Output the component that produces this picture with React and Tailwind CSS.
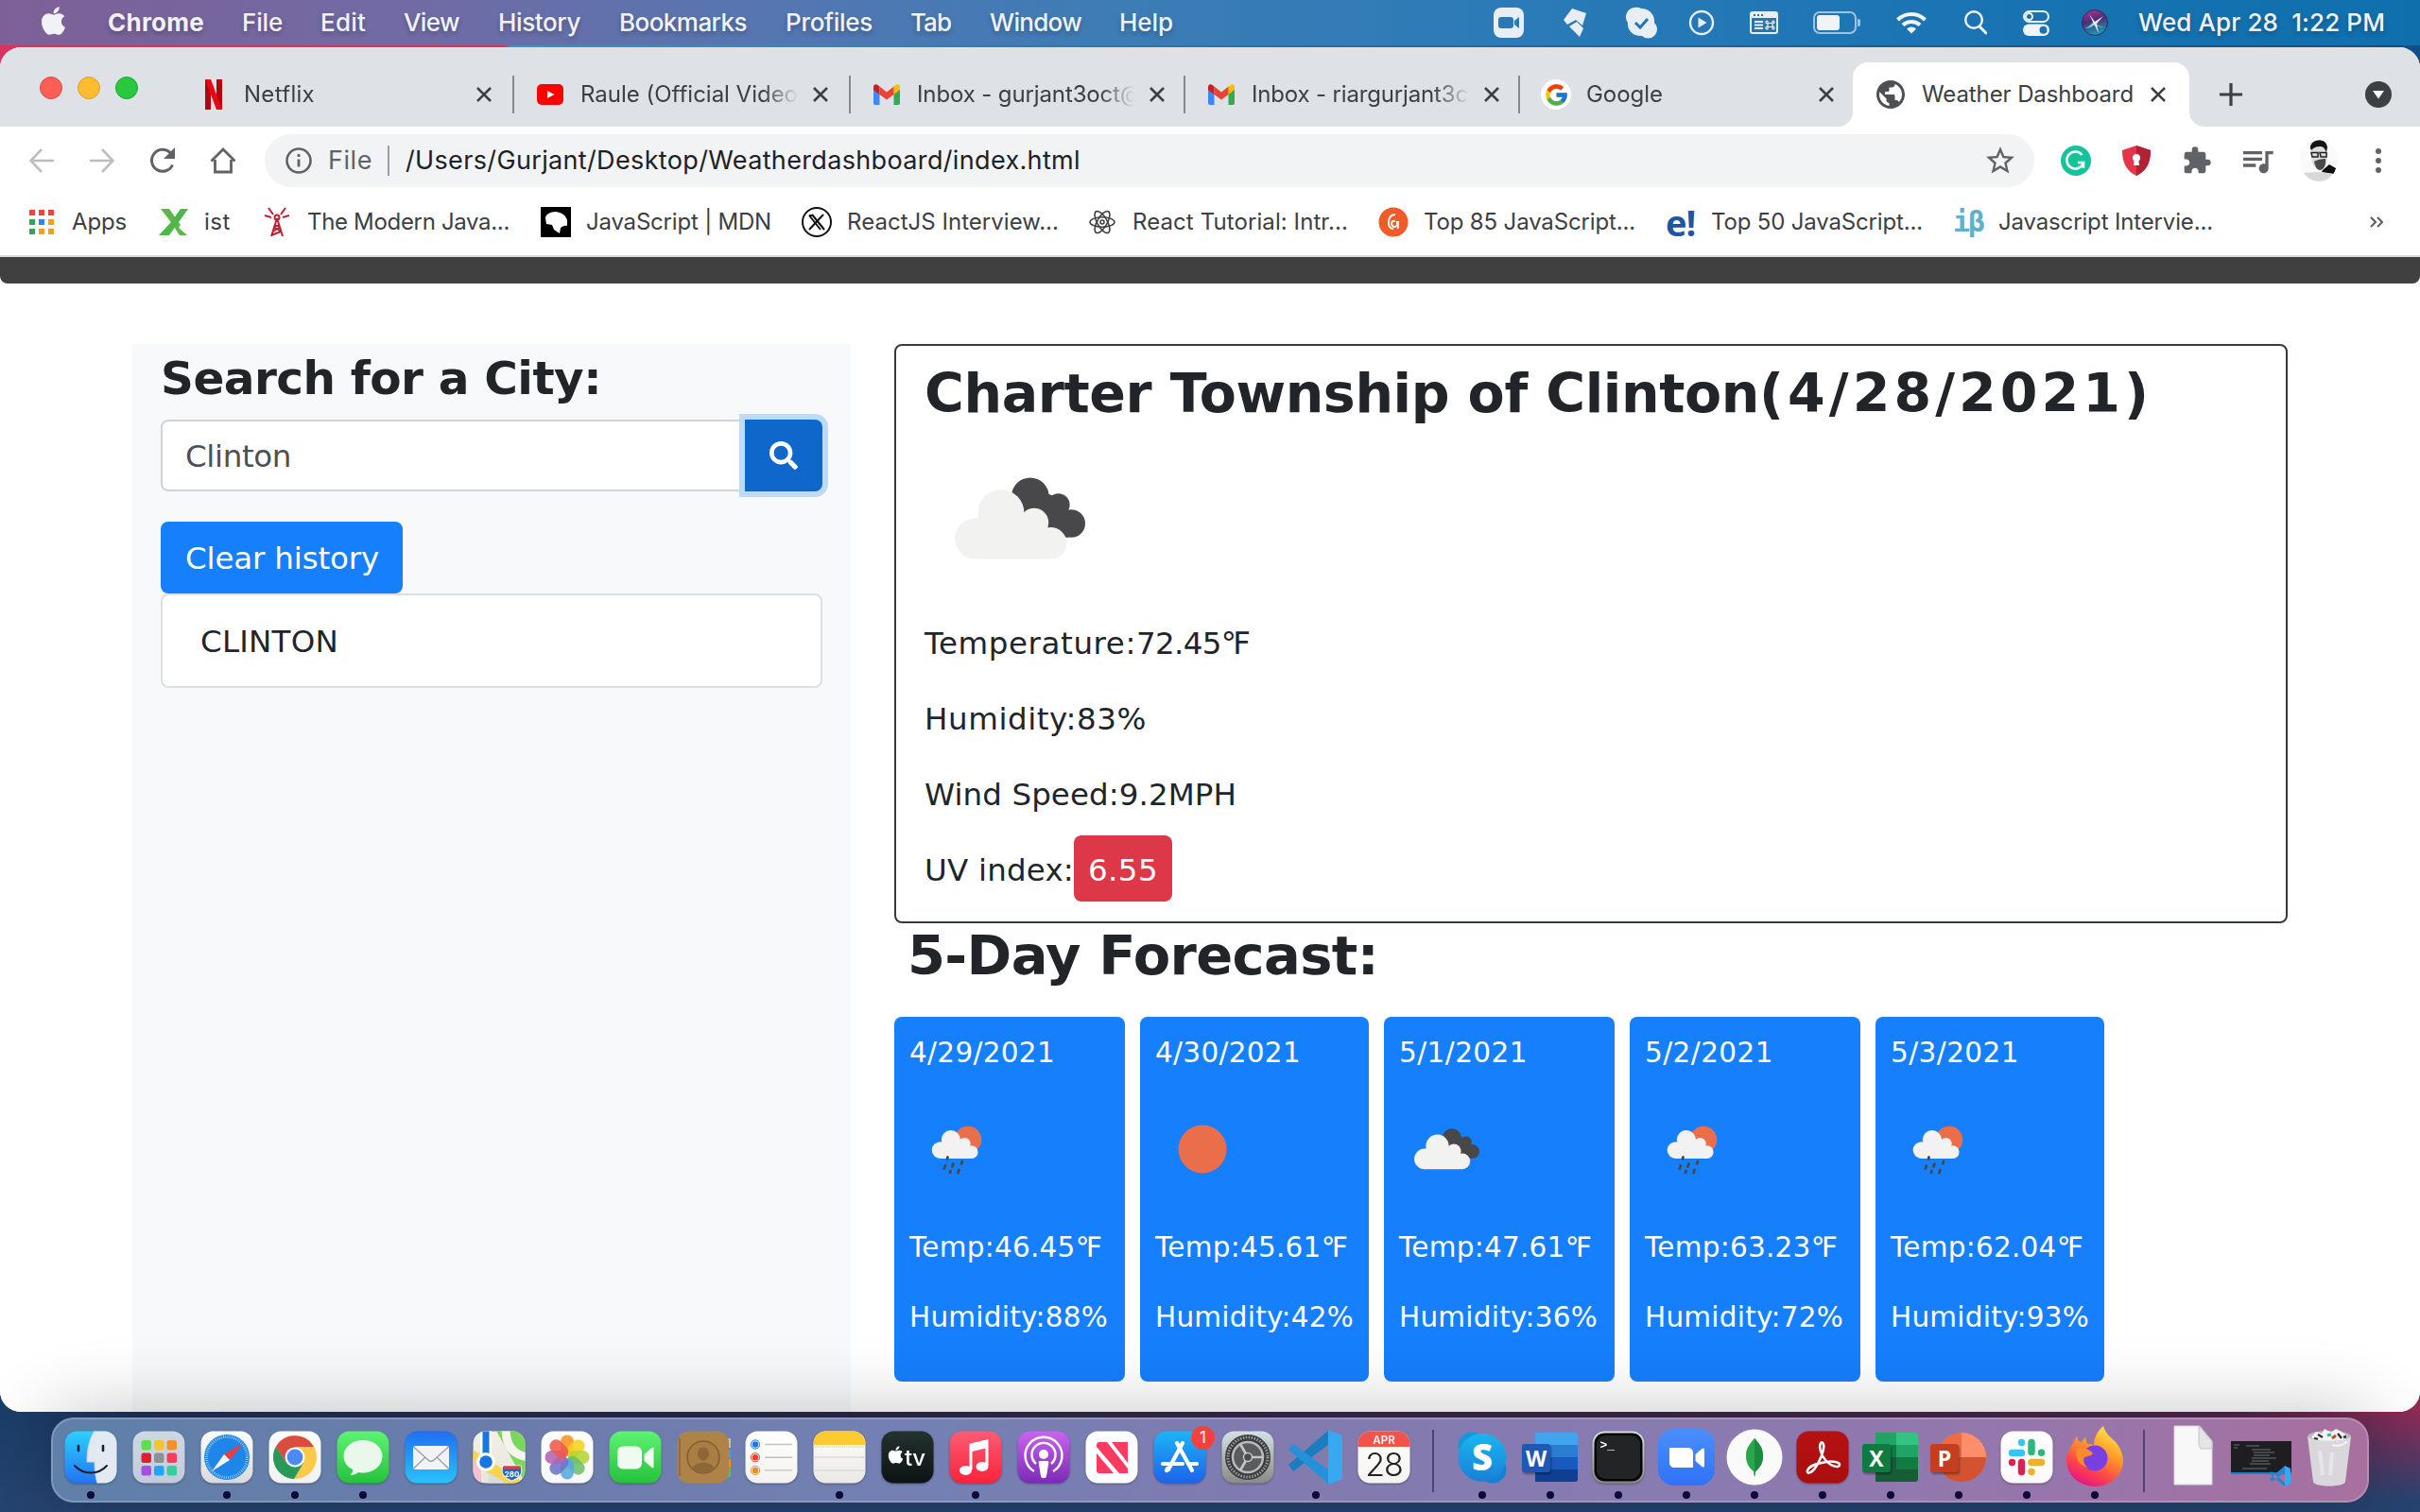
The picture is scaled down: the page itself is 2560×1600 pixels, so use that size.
import React, { useLayoutEffect, useRef } from "react";
import { FcGoogle } from "react-icons/fc";
import { FaApple, FaSearch } from "react-icons/fa";
import { MdExtension, MdQueueMusic, MdStarBorder, MdPublic } from "react-icons/md";

/* Text set to the exact width of its box by adjusting the tracking. */
function Fit({ className = "", children }) {
  const outer = useRef(null);
  const inner = useRef(null);
  useLayoutEffect(() => {
    const apply = () => {
      const el = inner.current;
      if (!el) return;
      el.style.letterSpacing = "0px";
      const delta = outer.current.getBoundingClientRect().width - el.getBoundingClientRect().width;
      el.style.letterSpacing = `${delta / el.textContent.length}px`;
    };
    apply();
    if (document.fonts && document.fonts.ready) document.fonts.ready.then(apply);
  }, []);
  return (
    <span ref={outer} className={"block shrink-0 whitespace-nowrap " + className}>
      <span ref={inner} className="inline-block whitespace-pre">{children}</span>
    </span>
  );
}

const menus = [
  ["Chrome", "ml-[43px] w-[102px] font-bold"],
  ["File", "ml-[40px] w-[43px]"],
  ["Edit", "ml-[40px] w-[48px]"],
  ["View", "ml-[40px] w-[59px]"],
  ["History", "ml-[41px] w-[87px]"],
  ["Bookmarks", "ml-[41px] w-[135px]"],
  ["Profiles", "ml-[41px] w-[92px]"],
  ["Tab", "ml-[40px] w-[43px]"],
  ["Window", "ml-[41px] w-[97px]"],
  ["Help", "ml-[40px] w-[57px]"],
];

function MenuBar() {
  return (
    <div className="flex h-12 items-center bg-[linear-gradient(90deg,#7d6096_0%,#716ba5_17%,#5476b1_32%,#3f7cb5_45%,#2b7bb7_62%,#1b74b3_80%,#0f6fad_100%)] text-[26px] leading-[48px] font-medium text-[#f0f2f8] [text-shadow:0_3px_5px_rgba(0,0,0,0.25)]">
      <FaApple className="-mt-1 ml-[42px] h-[34px] w-[29px] shrink-0" />
      {menus.map(([label, cls]) => (
        <Fit key={label} className={cls}>{label}</Fit>
      ))}
      <svg className="ml-[339px] h-8 w-8 shrink-0" viewBox="0 0 32 32">
        <rect width="32" height="32" rx="8" fill="#e9eef5" />
        <rect x="5" y="10" width="16" height="12" rx="3" fill="#2b78b2" />
        <path d="M22 14l5-4v12l-5-4z" fill="#2b78b2" />
      </svg>
      <svg className="ml-10 h-8 w-7 shrink-0" viewBox="0 0 28 32">
        <path d="M11 1l15 5-4 13-7-6-9 5-4-5z" fill="#e9eef5" />
        <path d="M16 15l7 7-4 9L8 20z" fill="#e9eef5" />
      </svg>
      <svg className="ml-[38px] h-9 w-9 shrink-0" viewBox="0 0 36 36">
        <path d="M11 2a9 9 0 0 1 7 1c9 0 15 7 14 15a9 9 0 0 1-13 14C10 33 3 26 4 18A10 10 0 0 1 11 2z" fill="#e9eef5" />
        <path d="M12 18l5 5 8-9" fill="none" stroke="#2276b3" strokeWidth="3" />
      </svg>
      <svg className="ml-8 h-7 w-7 shrink-0" viewBox="0 0 28 28">
        <circle cx="14" cy="14" r="12" fill="none" stroke="#e9eef5" strokeWidth="2.4" />
        <path d="M10.500 8.500l9 5.500-9 5.500z" fill="#e9eef5" />
      </svg>
      <svg className="ml-[37px] h-6 w-[30px] shrink-0" viewBox="0 0 30 24">
        <rect x="1" y="1" width="28" height="22" rx="2" fill="none" stroke="#e9eef5" strokeWidth="2" />
        <rect x="1" y="1" width="28" height="6" fill="#e9eef5" />
        <path d="M4 4h2M8 4h2M12 4h2" stroke="#2276b3" strokeWidth="2" />
        <path d="M5 11h9M5 14.500h9M5 18h9" stroke="#e9eef5" strokeWidth="2" />
        <path d="M19 12.500h5v4h-5zM19 12.500a1.300 1.300 0 1 1 0-2v8a1.300 1.300 0 1 1 0-2M24 12.500a1.300 1.300 0 1 0 0-2v8a1.300 1.300 0 1 0 0-2" fill="none" stroke="#e9eef5" strokeWidth="1.200" />
      </svg>
      <svg className="ml-[37px] h-6 w-[50px] shrink-0" viewBox="0 0 50 24">
        <rect x="1" y="1" width="44" height="22" rx="6" fill="none" stroke="#a0c4e0" strokeWidth="2" />
        <rect x="4" y="4" width="24" height="16" rx="3" fill="#f0f4f9" />
        <path d="M47 8a4 4 0 0 1 0 8z" fill="#a0c4e0" />
      </svg>
      <svg className="ml-[38px] h-6 w-8 shrink-0" viewBox="0 0 32 24">
        <g fill="none" stroke="#f0f4f9" strokeWidth="4">
          <path d="M1.500 9a20.500 20.500 0 0 1 29 0" />
          <path d="M7 14.500a13 13 0 0 1 18 0" />
        </g>
        <path d="M11 18.500a7 7 0 0 1 10 0l-5 5z" fill="#f0f4f9" />
      </svg>
      <svg className="ml-10 h-[26px] w-6 shrink-0" viewBox="0 0 24 26">
        <circle cx="10" cy="10" r="8.800" fill="none" stroke="#f0f4f9" strokeWidth="2.400" />
        <path d="M16 17l7 7" stroke="#f0f4f9" strokeWidth="3" strokeLinecap="round" />
      </svg>
      <svg className="ml-[38px] h-[27px] w-7 shrink-0" viewBox="0 0 28 27">
        <rect x="1" y="1" width="26" height="11" rx="5.500" fill="none" stroke="#f0f4f9" strokeWidth="2" />
        <circle cx="6.500" cy="6.500" r="3.500" fill="none" stroke="#f0f4f9" strokeWidth="2" />
        <rect y="14.500" width="28" height="12.500" rx="6.200" fill="#f0f4f9" />
        <circle cx="21.500" cy="20.700" r="4" fill="#1973b1" />
      </svg>
      <svg className="ml-[34px] h-7 w-7 shrink-0" viewBox="0 0 28 28">
        <defs>
          <linearGradient id="siri" x1="0" y1="0" x2="0.300" y2="1">
            <stop offset="0" stopColor="#c02f92" /><stop offset="0.500" stopColor="#4b2f78" /><stop offset="1" stopColor="#1c93b4" />
          </linearGradient>
        </defs>
        <circle cx="14" cy="14" r="13.500" fill="url(#siri)" stroke="#3a2a50" />
        <path d="M4 20c4-2 7-4 9-8 2 5 6 6 11 6-4 1-7 0-9-2-3 1-6 4-11 4z" fill="#7be3d8" />
        <path d="M8 5l6 8 9-6-7 8 2 10-5-10z" fill="#f1e9f8" />
      </svg>
      <Fit className="ml-8 w-[261px]">{"Wed Apr 28  1:22 PM"}</Fit>
    </div>
  );
}

function Close() {
  return (
    <svg className="h-4 w-4 shrink-0" viewBox="0 0 16 16">
      <path d="M1 1l14 14M15 1L1 15" stroke="#3c4043" strokeWidth="2.600" />
    </svg>
  );
}

const NetflixIcon = () => (
  <svg className="h-8 w-8" viewBox="0 0 32 32">
    <rect x="7" width="6" height="32" fill="#b1060f" />
    <rect x="19" width="6" height="32" fill="#b1060f" />
    <rect x="7" width="6" height="32" fill="#e50914" transform="skewX(20.600)" />
  </svg>
);
const YoutubeIcon = () => (
  <svg className="h-8 w-8" viewBox="0 0 32 32">
    <rect x="2" y="5" width="28" height="22" rx="5" fill="#ff0000" />
    <path d="M13 12l7.500 4-7.500 4z" fill="#fff" />
  </svg>
);
const GmailIcon = () => (
  <svg className="h-8 w-8" viewBox="0 0 32 32">
    <path d="M2 10l6.500 5v12H4a2 2 0 0 1-2-2z" fill="#4285f4" />
    <path d="M30 10l-6.500 5v12H28a2 2 0 0 0 2-2z" fill="#34a853" />
    <path d="M23.500 7.500L26 5.700c2-1.300 4 0 4 2.300v3l-6.500 5z" fill="#fbbc04" />
    <path d="M8.500 7.500L6 5.700C4 4.400 2 5.700 2 8v3l6.500 5z" fill="#c5221f" />
    <path d="M8.500 7.500l7.500 6 7.500-6V16L16 21.500 8.500 16z" fill="#ea4335" />
  </svg>
);
const GoogleIcon = () => (
  <span className="flex h-8 w-8 items-center justify-center rounded-full bg-white"><FcGoogle size={27} /></span>
);

const tabs = [
  { icon: <NetflixIcon />, cell: "w-[354px] pl-5", title: <Fit className="w-[75px]">Netflix</Fit> },
  { icon: <YoutubeIcon />, cell: "w-[356px] pl-[22px]", title: <Fit className="w-[230px]">Raule (Official Video</Fit> },
  { icon: <GmailIcon />, cell: "w-[354px] pl-[22px]", title: <Fit className="w-[238px]">Inbox - gurjant3oct@</Fit> },
  { icon: <GmailIcon />, cell: "w-[354px] pl-[22px]", title: <Fit className="w-[229px]">Inbox - riargurjant3c</Fit> },
  { icon: <GoogleIcon />, cell: "w-[352px] pl-[22px]", title: <Fit className="w-[81px]">Google</Fit> },
];

function TabStrip() {
  return (
    <div className="flex h-[84px] bg-[#dee1e6] pt-4 text-[24px] leading-[32px] text-[#3c4043]">
      <div className="flex w-[190px] shrink-0 gap-4 pt-[15px] pl-[42px]">
        <span className="h-6 w-6 rounded-full border border-[#e2463f] bg-[#ff5f57]" />
        <span className="h-6 w-6 rounded-full border border-[#e1a116] bg-[#febc2e]" />
        <span className="h-6 w-6 rounded-full border border-[#12ac28] bg-[#28c840]" />
      </div>
      {tabs.map((t, i) => (
        <div key={i} className={"flex h-[68px] shrink-0 items-center " + t.cell}>
          {t.icon}
          <div className="ml-4 w-[230px] shrink-0 overflow-hidden [mask-image:linear-gradient(to_right,#000_84%,transparent_100%)]">{t.title}</div>
          <div className="ml-4 flex flex-1"><Close /></div>
          {i < 4 && <div className="h-10 w-[2px] bg-[#85888d]" />}
        </div>
      ))}
      <div className="relative flex h-[68px] w-[356px] shrink-0 items-center rounded-t-[16px] bg-white pl-6">
        <svg className="absolute bottom-0 -left-4 h-4 w-4" viewBox="0 0 16 16"><path d="M16 0v16H0A16 16 0 0 0 16 0z" fill="#fff" /></svg>
        <svg className="absolute -right-4 bottom-0 h-4 w-4" viewBox="0 0 16 16"><path d="M0 0v16h16A16 16 0 0 1 0 0z" fill="#fff" /></svg>
        <MdPublic className="-ml-0.5 h-9 w-9 text-[#4d5156]" />
        <Fit className="ml-[15px] w-[224px]">Weather Dashboard</Fit>
        <div className="ml-[18px]"><Close /></div>
      </div>
      <svg className="mt-[22px] ml-8 h-6 w-6" viewBox="0 0 24 24"><path d="M12 0v24M0 12h24" stroke="#3c4043" strokeWidth="3.200" /></svg>
      <svg className="mt-5 ml-[130px] h-7 w-7" viewBox="0 0 28 28"><circle cx="14" cy="14" r="14" fill="#3c4043" /><path d="M8 10h12l-6 8.500z" fill="#fff" /></svg>
    </div>
  );
}

function Toolbar() {
  return (
    <div className="flex h-[72px] items-center bg-white text-[27px] leading-[40px]">
      <svg className="ml-[31px] h-[26px] w-[26px]" viewBox="0 0 26 26"><path d="M26 13H2M13 1L1.500 13 13 25" fill="none" stroke="#bcbec1" strokeWidth="2.600" /></svg>
      <svg className="ml-[38px] h-[26px] w-[26px]" viewBox="0 0 26 26"><path d="M0 13h24M13 1l11.500 12L13 25" fill="none" stroke="#bcbec1" strokeWidth="2.600" /></svg>
      <svg className="ml-[37px] h-7 w-7" viewBox="0 0 28 28"><path d="M24.500 18.500A11.500 11.500 0 1 1 22 5.500l2 2" fill="none" stroke="#5f6368" strokeWidth="3" /><path d="M27 0v12H15z" fill="#5f6368" /></svg>
      <svg className="ml-[36px] h-7 w-7" viewBox="0 0 28 28"><path d="M1.500 14.500L14 2l12.500 12.500M5.500 13v13h17V13" fill="none" stroke="#5f6368" strokeWidth="2.800" /></svg>
      <div className="ml-[30px] flex h-14 w-[1872px] items-center rounded-full bg-[#f1f3f4]">
        <svg className="ml-[22px] h-7 w-7" viewBox="0 0 28 28"><circle cx="14" cy="14" r="12.500" fill="none" stroke="#5f6368" strokeWidth="2.600" /><path d="M14 12.500v8M14 7v3" stroke="#5f6368" strokeWidth="2.800" /></svg>
        <Fit className="ml-[17px] w-[47px] text-[#5f6368]">File</Fit>
        <div className="ml-4 h-8 w-[2px] bg-[#9b9fa3]" />
        <Fit className="ml-[17px] w-[714px] text-[#202124]">/Users/Gurjant/Desktop/Weatherdashboard/index.html</Fit>
        <MdStarBorder className="ml-[955px] h-9 w-9 shrink-0 text-[#5f6368]" />
      </div>
      <svg className="ml-7 h-8 w-8" viewBox="0 0 32 32"><circle cx="16" cy="16" r="16" fill="#15c39a" /><path d="M22.500 10A9 9 0 1 0 24 18h-6M24 17v7" fill="none" stroke="#fff" strokeWidth="2.600" /></svg>
      <svg className="ml-8 h-8 w-8" viewBox="0 0 32 32"><path d="M16 0l15 5c0 14-5 22-15 27C6 27 1 19 1 5z" fill="#e5344a" /><path d="M16 0l15 5c0 14-5 22-15 27z" fill="#b02234" /><circle cx="16" cy="13" r="4" fill="#fff" /><path d="M14 13h4l1 8h-6z" fill="#fff" /></svg>
      <MdExtension className="ml-[32px] h-8 w-8 text-[#5f6368]" />
      <MdQueueMusic className="ml-[28px] h-[40px] w-[40px] text-[#5f6368]" />
      <svg className="ml-[25px] h-11 w-10" viewBox="0 0 40 44">
        <defs><clipPath id="avatar"><ellipse cx="20" cy="22" rx="20" ry="22" /></clipPath></defs>
        <g clipPath="url(#avatar)">
          <rect width="40" height="44" fill="#fafafa" />
          <path d="M12 6c2-5 14-6 16 0l1 12c0 8-4 13-8 13-5 0-9-5-9-12z" fill="#dedede" />
          <path d="M11 9c-1-10 17-13 18-1l-1 5c-2-4-3-6-7-6s-6 1-9 4z" fill="#161616" />
          <path d="M12 13.500h7v4.500h-6zM21 13.500h7v4.500h-6z" fill="none" stroke="#222" strokeWidth="1.500" />
          <path d="M15 23c2-2 9-3 12-3 1 7-2 12-6 12-3 0-5-4-6-9z" fill="#4a4a4a" />
          <path d="M24 32l7-6 7 4-2 6-13-2z" fill="#111" />
          <path d="M3 35l16-1 16 2-8 8H8z" fill="#d8d8d8" />
        </g>
      </svg>
      <svg className="ml-10 h-[26px] w-[6px]" viewBox="0 0 6 26"><circle cx="3" cy="3" r="3" fill="#5f6368" /><circle cx="3" cy="13" r="3" fill="#5f6368" /><circle cx="3" cy="23" r="3" fill="#5f6368" /></svg>
    </div>
  );
}

function AppsGrid() {
  const colors = ["bg-[#f0443a]", "bg-[#f0443a]", "bg-[#f0443a]", "bg-[#35a15a]", "bg-[#2f86f0]", "bg-[#f0a020]", "bg-[#35a15a]", "bg-[#f0a020]", "bg-[#f0a020]"];
  return (
    <div className="ml-[31px] grid w-[26px] grid-cols-3 gap-1">
      {colors.map((c, i) => <span key={i} className={"h-[6px] w-[6px] " + c} />)}
    </div>
  );
}

function Bookmarks() {
  return (
    <div className="flex h-16 items-center bg-white pb-[7px] text-[24px] leading-[30px] text-[#3c4043]">
      <AppsGrid />
      <Fit className="ml-[19px] w-[58px]">Apps</Fit>
      <svg className="ml-[34px] h-7 w-8" viewBox="0 0 32 28">
        <path d="M2 0h9l12 17-2 3 9 8h-8L12 13z" fill="#5cb947" /><path d="M23 0h8L11 28H0l13-14z" fill="#4db748" />
      </svg>
      <Fit className="ml-4 w-[28px]">ist</Fit>
      <svg className="ml-[35px] h-8 w-7" viewBox="0 0 28 32">
        <g fill="none" stroke="#c3202f" strokeWidth="2"><path d="M14 12L8 31M14 12l6 19M11 20h6M9.500 26l8-5M18.500 26l-8-5M8 30l10-4" /><path d="M10 8L5 1M18 8l5-7M8 11L1 9M20 11l7-2" /><circle cx="14" cy="11" r="2.500" /></g>
      </svg>
      <Fit className="ml-[18px] w-[214px]">The Modern Java...</Fit>
      <svg className="ml-[33px] h-8 w-8" viewBox="0 0 32 32"><rect width="32" height="32" fill="#000" /><path d="M5 12c0-4 5-7 11-7 6 1 10 3 12 9v6c-3-1-5 1-7 2l-1 6-6-4-2-5-6-1z" fill="#fff" /></svg>
      <Fit className="ml-4 w-[196px]">JavaScript | MDN</Fit>
      <svg className="ml-8 h-8 w-8" viewBox="0 0 32 32"><circle cx="16" cy="16" r="15" fill="#fff" stroke="#111" strokeWidth="2" /><path d="M8 9l12 15M11 8l13 16M8 24L23 8M8 9h3" fill="none" stroke="#111" strokeWidth="2" /></svg>
      <Fit className="ml-4 w-[224px]">ReactJS Interview...</Fit>
      <svg className="ml-8 h-7 w-7" viewBox="0 0 28 28"><g fill="none" stroke="#3c3c3c" strokeWidth="1.500"><ellipse cx="14" cy="14" rx="13" ry="5.200" /><ellipse cx="14" cy="14" rx="13" ry="5.200" transform="rotate(60 14 14)" /><ellipse cx="14" cy="14" rx="13" ry="5.200" transform="rotate(120 14 14)" /><circle cx="14" cy="14" r="2" /></g></svg>
      <Fit className="ml-[18px] w-[228px]">React Tutorial: Intr...</Fit>
      <svg className="ml-8 h-8 w-8" viewBox="0 0 32 32"><circle cx="16" cy="16" r="15.500" fill="#f15a29" /><path d="M18 8c-5 0-7 4-7 9 0 4 2 6 5 6M18 15c-4-1-5 3-3 5s5 1 5-2v-3M21 15v8" fill="none" stroke="#fff" strokeWidth="2" /></svg>
      <Fit className="ml-4 w-[224px]">Top 85 JavaScript...</Fit>
      <span className="ml-8 block w-8 shrink-0 font-['Open_Sans'] text-[38px] leading-[28px] font-bold tracking-[-1px] text-[#1e56a0]">e!</span>
      <Fit className="ml-4 w-[224px]">Top 50 JavaScript...</Fit>
      <span className="ml-8 block w-8 shrink-0 font-['DejaVu_Sans_Mono'] text-[30px] leading-[30px] font-bold tracking-[-2px] text-[#5fb0c8]">iβ</span>
      <Fit className="ml-4 w-[227px]">Javascript Intervie...</Fit>
      <svg className="ml-[166px] h-3 w-[14px]" viewBox="0 0 14 12"><path d="M1 1l5 5-5 5M8 1l5 5-5 5" fill="none" stroke="#5f6368" strokeWidth="2.200" /></svg>
    </div>
  );
}

function FrontCloud() {
  return (
    <g>
      <circle cx="27" cy="60.400" r="10.900" /><circle cx="40.500" cy="46.800" r="12.200" />
      <circle cx="58" cy="52" r="7.600" /><circle cx="66.800" cy="62.900" r="8.400" />
      <path d="M27 71.300h40L60 50 44 46 26 56z" />
    </g>
  );
}

function BrokenClouds({ className }) {
  return (
    <svg className={"block " + className} viewBox="0 0 100 100">
      <g fill="#48484a">
        <circle cx="55.900" cy="38.100" r="9.900" /><circle cx="70.800" cy="42.600" r="6" /><circle cx="77.600" cy="52.500" r="7.400" />
        <path d="M48 42l16-6 8 4 5 8-1 12-12-2z" />
      </g>
      <g fill="#f2f2f0"><FrontCloud /></g>
    </svg>
  );
}

function RainSun({ className }) {
  return (
    <svg className={"block " + className} viewBox="0 0 100 100">
      <circle cx="62" cy="40" r="14.300" fill="#eb6e4b" />
      <g fill="#f2f2f2" transform="translate(10.350 1.700) scale(0.828 0.817)"><FrontCloud /></g>
      <path d="M40.500 58.500l-.5 2M56 63l-.8 2.500M38 67.500l-1.200 3M46.500 65.500l-1 3M43.500 73l-.5 2M52.500 72l-1 3" stroke="#48484a" strokeWidth="2.800" strokeLinecap="round" />
    </svg>
  );
}

function Sun({ className }) {
  return <svg className={"block " + className} viewBox="0 0 100 100"><circle cx="50" cy="50" r="25.500" fill="#eb6e4b" /></svg>;
}

const days = [
  { date: "4/29/2021", dw: "w-[154px]", w: "w-[244px]", Icon: RainSun, temp: "46.45", hum: "88" },
  { date: "4/30/2021", dw: "w-[154px]", w: "w-[242px]", Icon: Sun, temp: "45.61", hum: "42" },
  { date: "5/1/2021", dw: "w-[136px]", w: "w-[244px]", Icon: BrokenClouds, temp: "47.61", hum: "36" },
  { date: "5/2/2021", dw: "w-[136px]", w: "w-[244px]", Icon: RainSun, temp: "63.23", hum: "72" },
  { date: "5/3/2021", dw: "w-[136px]", w: "w-[242px]", Icon: RainSun, temp: "62.04", hum: "93" },
];

function Page() {
  return (
    <div className="h-[1222px] bg-white font-['DejaVu_Sans',Verdana,sans-serif] text-[32.5px] leading-[48px] text-[#212529]">
      <div className="h-7 rounded-b-[8px] bg-[#404040]" />
      <div className="mt-16 flex">
        <aside className="ml-[140px] h-[1130px] w-[760px] shrink-0 bg-[#f8f9fa] px-[30px]">
          <Fit className="mt-[7px] w-[466px] text-[48.5px] leading-[58px] font-bold">Search for a City:</Fit>
          <div className="mt-[15px] flex h-[76px]">
            <div className="flex w-[618px] items-center rounded-l-[8px] border-2 border-r-0 border-[#ced4da] bg-white pt-0.5 pl-6 text-[#495057]">
              <Fit className="w-[112px]">Clinton</Fit>
            </div>
            <button className="flex w-[82px] items-center justify-center rounded-r-[8px] bg-[#0f66cb] text-white shadow-[0_0_0_6px_#bddaf9]">
              <FaSearch size={30} />
            </button>
          </div>
          <button className="mt-8 flex h-[76px] w-[256px] items-center justify-center rounded-[8px] bg-[#167ffc] pt-0.5 pl-px text-white">
            <Fit className="w-[205px]">Clear history</Fit>
          </button>
          <div className="flex h-[100px] items-center rounded-[8px] border-2 border-[#dfdfdf] bg-white pt-0.5 pl-[40px]">
            <Fit className="w-[146px]">CLINTON</Fit>
          </div>
        </aside>
        <main className="ml-[46px] w-[1474px] shrink-0">
          <section className="h-[613px] rounded-[8px] border-2 border-[#343a40] px-[30px] pt-[16px]">
            <div className="flex text-[57px] leading-[68px] font-bold">
              <Fit className="w-[883px]">Charter Township of Clinton</Fit>
              <Fit className="w-[416px]">(4/28/2021)</Fit>
            </div>
            <BrokenClouds className="-mt-px h-[200px] w-[200px]" />
            <div className="mt-2 flex"><Fit className="w-[224px]">Temperature:</Fit><Fit className="w-[120px]">72.45℉</Fit></div>
            <Fit className="mt-8 w-[235px]">Humidity:83%</Fit>
            <Fit className="mt-8 w-[330px]">Wind Speed:9.2MPH</Fit>
            <div className="mt-[19px] flex h-[70px] items-center">
              <Fit className="mt-1 w-[158px]">UV index:</Fit>
              <div className="flex h-[70px] w-[104px] items-center justify-center rounded-[8px] bg-[#dc3848] pt-1 text-white">
                <Fit className="w-[74px]">6.55</Fit>
              </div>
            </div>
          </section>
          <Fit className="mt-px ml-3.5 w-[498px] text-[57.5px] leading-[68px] font-bold">5-Day Forecast:</Fit>
          <div className="mt-[30px] flex gap-4">
            {days.map(({ date, dw, w, Icon, temp, hum }) => (
              <div key={date} className={"h-[386px] shrink-0 rounded-[8px] bg-[#167ffc] px-4 pt-4 text-[29.5px] leading-[44px] text-white " + w}>
                <Fit className={dw}>{date}</Fit>
                <Icon className="mt-[30px] h-[100px] w-[100px]" />
                <Fit className="mt-8 w-[204px]">{`Temp:${temp}℉`}</Fit>
                <Fit className="mt-[30px] w-[210px]">{`Humidity:${hum}%`}</Fit>
              </div>
            ))}
          </div>
        </main>
      </div>
    </div>
  );
}

function Grad({ id, a, b }) {
  return (
    <linearGradient id={id} x1="0" y1="0" x2="0" y2="1"><stop offset="0" stopColor={a} /><stop offset="1" stopColor={b} /></linearGradient>
  );
}

/* Rounded tile with a vertical two-colour fill. */
function Tile({ id, a, b, children }) {
  return (
    <svg className="h-14 w-14 overflow-visible drop-shadow-[0_1px_1px_rgba(0,0,0,0.3)]" viewBox="0 0 56 56">
      <defs><Grad id={id} a={a} b={b} /><clipPath id={id + "c"}><rect x="0.500" y="0.500" width="55" height="55" rx="13" /></clipPath></defs>
      <rect x="0.500" y="0.500" width="55" height="55" rx="13" fill={`url(#${id})`} />
      <g clipPath={`url(#${id}c)`}>{children}</g>
    </svg>
  );
}

function Office({ letter, tile, children }) {
  return (
    <svg className="h-14 w-14 overflow-visible" viewBox="0 0 56 56">
      {children}
      <rect x="-2" y="14" width="30" height="30" rx="3" fill={tile} className="drop-shadow-[1px_2px_1px_rgba(0,0,0,0.35)]" />
      <text x="13" y="37.500" textAnchor="middle" fontFamily="Open Sans" fontWeight="700" fontSize="23" fill="#fff">{letter}</text>
    </svg>
  );
}

const launch = ["#5fe04a", "#f8c32c", "#f7902a", "#e0202c", "#8e9296", "#fb3a5c", "#a64fe0", "#1fa6f8", "#35cf9c"];
const petals = ["#f7941d", "#f4d21f", "#b6d433", "#6cbf6a", "#5aa7dc", "#6a74c8", "#b264b4", "#ee5a4c"];

const dock = [
  ["finder", true, <Tile id="finder" a="#2dd0fd" b="#2374f3">
    <path d="M32 0C26 10 24 20 24 33h8c0 8 1 16 3 23h21V0z" fill="#e3e9f1" />
    <path d="M32 0C26 10 24 20 24 33h8c0 8 1 16 3 23" fill="none" stroke="#c5d4e6" strokeWidth="1" />
    <path d="M15 16v5M41 16v5" stroke="#14202e" strokeWidth="2.600" strokeLinecap="round" />
    <path d="M11 37c9 10 25 10 34 0" fill="none" stroke="#14202e" strokeWidth="2" strokeLinecap="round" />
  </Tile>],
  ["launchpad", false, <Tile id="launch" a="#ced8e4" b="#c2cbdc">
    {launch.map((c, i) => <rect key={i} x={9.500 + (i % 3) * 13.500} y={10 + Math.floor(i / 3) * 13.500} width="10.500" height="10.500" rx="2.500" fill={c} />)}
  </Tile>],
  ["safari", true, <Tile id="safari" a="#ffffff" b="#d9d9db">
    <circle cx="28" cy="28" r="24" fill="#1d86e8" />
    <circle cx="28" cy="28" r="21.500" fill="none" stroke="#a7d4fa" strokeWidth="3" strokeDasharray="0.800 1.450" />
    <path d="M45 13L25 25l6 6z" fill="#f23b36" /><path d="M12 43l13-18 6 6z" fill="#f5f5f5" />
  </Tile>],
  ["chrome", true, <Tile id="chromei" a="#ffffff" b="#f1f1f1">
    <circle cx="28" cy="28" r="23" fill="#fdc94a" />
    <path d="M8.100 16.500A23 23 0 0 0 27 51l10-17-9-6-10 5z" fill="#279a5b" />
    <path d="M8.100 16.500L18 33l10-5V17h20A23 23 0 0 0 8.100 16.500z" fill="#db4b3f" />
    <circle cx="28" cy="28" r="10.500" fill="#fff" /><circle cx="28" cy="28" r="8.400" fill="#4c8bf5" />
  </Tile>],
  ["messages", true, <Tile id="messages" a="#5ff273" b="#25c23c">
    <path d="M28 10c12 0 20.500 7.500 20.500 17S40 44.500 28 44.500c-2 0-3-.1-5-.5-2 2-5 3-8.500 3 2-2 3-4 2.500-6-6-3-9.500-8-9.500-14C7.500 17.500 16 10 28 10z" fill="#e9f8ea" />
  </Tile>],
  ["mail", false, <Tile id="mail" a="#1f6ff0" b="#29c2fb">
    <rect x="9" y="16" width="38" height="25" rx="2.500" fill="#f2f3f5" />
    <path d="M9.500 17l15.500 14c2 1.800 4 1.800 6 0L46.500 17M9.500 40l12.500-12M46.500 40L34 28" fill="none" stroke="#9a9da3" strokeWidth="1.300" />
  </Tile>],
  ["maps", false, <Tile id="maps" a="#f3efe4" b="#e8e6dc">
    <path d="M25 0h31v56z" fill="#7bd65c" /><path d="M0 20l56 36H36L0 36z" fill="#fbd44c" />
    <path d="M35-2c0 18 8 28 24 30" fill="none" stroke="#f5f4ef" strokeWidth="9" />
    <path d="M0 30v26h9V36z" fill="#f6bfd0" /><path d="M17 56V44l20 12z" fill="#d9dcd8" />
    <path d="M14-1v32" stroke="#fff" strokeWidth="12" /><path d="M14-1v34" stroke="#1577e6" strokeWidth="7" />
    <circle cx="14" cy="33" r="10" fill="#fff" /><circle cx="14" cy="33" r="6.800" fill="#1577e6" />
    <path d="M32 37h19c2 7 1 12-9.500 16C31 49 30 44 32 37z" fill="#2468c4" stroke="#fff" strokeWidth="1" /><path d="M32.500 37.500h18v3h-18z" fill="#e63a35" />
    <text x="41.500" y="48.500" textAnchor="middle" fontFamily="Inter" fontWeight="700" fontSize="8" fill="#fff">280</text>
  </Tile>],
  ["photos", false, <Tile id="photos" a="#ffffff" b="#f8f8f8">
    {petals.map((c, i) => <rect key={c} x="21" y="4.500" width="14" height="22.500" rx="7" fill={c} opacity="0.880" transform={`rotate(${i * 45} 28 28)`} />)}
  </Tile>],
  ["facetime", false, <Tile id="facetime" a="#5ff273" b="#25c23c">
    <rect x="9" y="16.500" width="26" height="24" rx="6" fill="#f1faf1" /><path d="M37.500 25l8-7c1.500-1 2-.5 2 1v19c0 1.500-.5 2-2 1l-8-7z" fill="#f1faf1" />
  </Tile>],
  ["contacts", false, <svg className="h-14 w-14 overflow-visible" viewBox="0 0 56 56">
    <path d="M54 8h3v10h-3z" fill="#b7bdc2" /><path d="M54 20h3v9h-3z" fill="#38a6e4" /><path d="M54 30h3v9h-3z" fill="#f58a1f" /><path d="M54 40h3v9h-3z" fill="#46c85a" />
    <rect x="0.500" y="0.500" width="54.500" height="55" rx="12" fill="#ad8349" /><path d="M3 8v40" stroke="#936c39" strokeWidth="2" />
    <circle cx="28" cy="28" r="17" fill="#a87e45" stroke="#855f30" strokeWidth="1.500" /><ellipse cx="28" cy="24.500" rx="6" ry="7" fill="#8d6737" /><path d="M16 40c3-8 21-8 24 0-6 6-18 6-24 0z" fill="#8d6737" />
  </svg>],
  ["reminders", false, <Tile id="reminders" a="#ffffff" b="#f3f2ef">
    {["#1577f2", "#ee4035", "#ef8c22"].map((c, i) => <g key={c}><circle cx="11" cy={14.500 + i * 13.700} r="4.600" fill="none" stroke={c} strokeWidth="1" /><circle cx="11" cy={14.500 + i * 13.700} r="3.200" fill={c} /><path d={`M21 ${14.500 + i * 13.700}h29`} stroke="#c2c2c2" strokeWidth="1.400" /></g>)}
  </Tile>],
  ["notes", true, <Tile id="notes" a="#ffffff" b="#e9e8e4">
    <path d="M0 0h56v15H0z" fill="#fdcb2f" /><path d="M0 17h56" stroke="#b5b2a8" strokeDasharray="1 1.200" /><path d="M0 28h56M0 42h56" stroke="#cfcecb" strokeWidth="1.200" />
  </Tile>],
  ["tv", false, <Tile id="tv" a="#25322f" b="#0c1213">
    <foreignObject x="5" y="15" width="22" height="24"><FaApple size={21} color="#fff" /></foreignObject>
    <text x="25" y="37" fontFamily="Inter" fontWeight="500" fontSize="24" letterSpacing="-0.500" fill="#fff">tv</text>
  </Tile>],
  ["music", true, <Tile id="music" a="#fb5c74" b="#fa233b">
    <path d="M23 41V15l17-4v26" fill="none" stroke="#fff" strokeWidth="3" /><path d="M22 14.500l19-4.500v8l-19 4.500z" fill="#fff" />
    <ellipse cx="17.500" cy="42" rx="6.500" ry="5" fill="#fff" /><ellipse cx="35" cy="38" rx="6.500" ry="5" fill="#fff" />
  </Tile>],
  ["podcasts", false, <Tile id="podcasts" a="#ca64ef" b="#7a2ab5">
    <g fill="none" stroke="#fff" strokeWidth="2.400"><path d="M18 43a19.500 19.500 0 1 1 20 0" /><path d="M20 35a12.500 12.500 0 1 1 16 0" /></g>
    <circle cx="28" cy="25" r="5" fill="#fff" /><path d="M24 32h8c1 0 1.500 1 1.300 2L31 48c-.5 3-5.500 3-6 0l-2.300-14c-.2-1 .3-2 1.300-2z" fill="#fff" />
  </Tile>],
  ["news", false, <Tile id="news" a="#ffffff" b="#ffffff">
    <path d="M14 12h9l22 28v5h-9L12 17v-3z" fill="#fa3a5e" /><path d="M28 12h17v22zM12 24l18 21H14l-2-2z" fill="#fa3a5e" />
  </Tile>],
  ["appstore", false, <Tile id="appstore" a="#1cb4f8" b="#1d63ea">
    <path d="M31 13L16 41M25 13l16 29M10 35h21M38 35h8M14 42l1-2" stroke="#fff" strokeWidth="4.200" strokeLinecap="round" />
  </Tile>],
  ["settings", false, <Tile id="settings" a="#d3e1e4" b="#8a8985">
    <circle cx="28" cy="28" r="24" fill="#3b3c3e" /><circle cx="28" cy="28" r="21" fill="none" stroke="#9b9c9d" strokeWidth="3" strokeDasharray="1.500 1.500" />
    <circle cx="28" cy="28" r="16" fill="#5b5c5e" stroke="#b9babb" strokeWidth="2.500" /><path d="M28 28l-8-14M28 28h16M28 28l-8 14" stroke="#c6c6c6" strokeWidth="2.600" /><circle cx="28" cy="28" r="4.500" fill="#4a4b4d" stroke="#c6c6c6" strokeWidth="1.500" />
  </Tile>],
  ["vscode", true, <svg className="h-[60px] w-[60px]" viewBox="0 0 60 60">
    <path d="M1 38l5 7 38-29V1z" fill="#1b7cc0" /><path d="M1 22l5-6 38 28v15z" fill="#2591d8" /><path d="M43 1l15 6v46l-15 6z" fill="#38a9f0" />
  </svg>],
  ["calendar", false, <Tile id="calendar" a="#ffffff" b="#f4f3f1">
    <path d="M0 0h56v17H0z" fill="#f2544c" />
    <text x="28" y="14" textAnchor="middle" fontFamily="Inter" fontWeight="600" fontSize="11.500" fill="#fff">APR</text>
    <text x="28" y="48" textAnchor="middle" fontFamily="Inter" fontWeight="300" fontSize="34" letterSpacing="-1" fill="#222">28</text>
  </Tile>],
  ["divider1"],
  ["skype", true, <svg className="h-14 w-14" viewBox="0 0 56 56">
    <defs><Grad id="skype" a="#18b7ef" b="#1a7fd8" /></defs>
    <circle cx="17" cy="16" r="14.500" fill="#1497dc" /><circle cx="39" cy="41" r="14.500" fill="#1780d6" /><circle cx="28" cy="28.500" r="25.500" fill="url(#skype)" />
    <text x="28" y="42" textAnchor="middle" fontFamily="Open Sans" fontWeight="800" fontSize="38" fill="#fff">S</text>
  </svg>],
  ["word", true, <Office letter="W" tile="#1f57b5"><path d="M12 2h42a3 3 0 0 1 3 3v11H12z" fill="#41a5ee" /><path d="M12 15h45v13H12z" fill="#2b7cd3" /><path d="M12 28h45v13H12z" fill="#185abd" /><path d="M12 41h45v10a3 3 0 0 1-3 3H12z" fill="#103f91" /></Office>],
  ["terminal", true, <Tile id="terminal" a="#d6e2e4" b="#8a8985"><rect x="2.500" y="2.500" width="51" height="51" rx="11" fill="#050505" /><rect x="5" y="5" width="46" height="46" rx="9" fill="#232425" /><text x="8.500" y="19" fontFamily="Liberation Mono" fontWeight="700" fontSize="13" fill="#fff">&gt;_</text></Tile>],
  ["zoom", true, <svg className="h-[60px] w-[60px]" viewBox="0 0 60 60"><defs><Grad id="zoomg" a="#4a8ffd" b="#2f72f8" /></defs><rect width="60" height="60" rx="17" fill="url(#zoomg)" /><path d="M12 20h19c4 0 6 2 6 6v15H18c-4 0-6-2-6-6zM39.500 27l7-6c1.500-1 2.500-.5 2.500 1v17c0 1.500-1 2-2.500 1l-7-6z" fill="#fff" /></svg>],
  ["mongodb", true, <svg className="h-[60px] w-[60px]" viewBox="0 0 60 60"><circle cx="30" cy="30" r="29.500" fill="#fafafa" /><path d="M30 10c8 9 9 13 9 19 0 7-3 12-8 16l-.5 5h-1L29 45c-5-4-8-9-8-16 0-6 1-10 9-19z" fill="#2aa64c" /><path d="M30 10c8 9 9 13 9 19 0 7-3 12-8 16l-1 5z" fill="#1b8a3f" /></svg>],
  ["acrobat", true, <Tile id="acrobat" a="#b51212" b="#a90e0e"><path d="M12 42c2-5 12-8 20-9 7-1 14 0 14 3 0 4-9 2-15-5-5-6-7-14-5-18 2-2 4 1 3 6-1 7-7 19-11 23-3 3-7 4-6 0z" fill="none" stroke="#fff" strokeWidth="2.500" /></Tile>],
  ["excel", true, <Office letter="X" tile="#117a41"><path d="M12 2h22v14H12z" fill="#21a366" /><path d="M34 2h20a3 3 0 0 1 3 3v11H34z" fill="#33c481" /><path d="M12 15h22v13H12z" fill="#107c41" /><path d="M34 15h23v13H34z" fill="#21a366" /><path d="M12 28h22v13H12z" fill="#185c37" /><path d="M34 28h23v13H34z" fill="#107c41" /><path d="M12 41h45v10a3 3 0 0 1-3 3H12z" fill="#185c37" /></Office>],
  ["powerpoint", true, <Office letter="P" tile="#c43e1f"><circle cx="31" cy="28" r="26" fill="#ed6c47" /><path d="M31 2a26 26 0 0 1 26 26H31z" fill="#ff8f6b" /><path d="M5 28h52a26 26 0 0 1-52 0z" fill="#d35230" /></Office>],
  ["slack", true, <Tile id="slack" a="#ffffff" b="#fafafa">
    <path d="M22.500 12.500v.1M12.500 23.500h10" stroke="#36c5f0" strokeWidth="7.500" strokeLinecap="round" /><path d="M33 12.500v10M43.500 23.200v.1" stroke="#2eb67d" strokeWidth="7.500" strokeLinecap="round" />
    <path d="M12.500 33.500v.1M22.500 33.500v10" stroke="#e01e5a" strokeWidth="7.500" strokeLinecap="round" /><path d="M33 33.500h10.500M33 43.500v.1" stroke="#ecb22e" strokeWidth="7.500" strokeLinecap="round" />
  </Tile>],
  ["firefox", true, <svg className="h-[62px] w-[60px] overflow-visible" viewBox="0 0 60 62">
    <defs><linearGradient id="fox" x1="0.800" y1="0" x2="0.300" y2="1"><stop offset="0" stopColor="#fff04a" /><stop offset="0.400" stopColor="#ff9a28" /><stop offset="0.750" stopColor="#ff3f4c" /><stop offset="1" stopColor="#e0148a" /></linearGradient></defs>
    <path d="M39-2c2 8 8 12 13 17 5 6 8 13 8 20a30 27 0 0 1-60 0c0-9 4-14 7-19l4-8c0 4 2 6 4 8l5-6 2 7c2 0 5 0 7 1 0-8 5-16 10-20z" fill="url(#fox)" />
    <circle cx="30" cy="32" r="13.500" fill="#7a3fe0" /><path d="M10 22c8-2 14 0 18 5-2 3-6 3-9 4-2 4 0 9 4 11-9-2-14-9-13-20z" fill="#ff8a2a" />
  </svg>],
  ["divider2"],
  ["document", false, <svg className="-mt-1 h-16 w-[42px]" viewBox="0 0 42 64"><path d="M1 1h27l13 16v46H1z" fill="#f8f8f8" stroke="#d5d5d5" /><path d="M27 1v20l2 4h12V17z" fill="#e4e4e4" stroke="#c5c5c5" /></svg>],
  ["window", false, <svg className="h-14 w-[64px] overflow-visible" viewBox="0 0 64 56"><rect y="11" width="64" height="35" fill="#1e1e20" /><path d="M0 45h64" stroke="#1b7fc8" strokeWidth="2" /><path d="M3 15h6M3 18h4M16 16h14M22 20h20M24 23h22M24 26h17M22 29h26M22 32h18M20 35h22M12 40h26" stroke="#6d7076" strokeWidth="1" /><path d="M57 37L41 51l2 3 14-10zM41 46l2-3 14 12v4z" fill="#1f86d0" /><path d="M57 37l6 3v16l-6 3z" fill="#38a9f0" /></svg>],
  ["trash", false, <svg className="h-[62px] w-12" viewBox="0 0 48 62"><ellipse cx="24" cy="9" rx="23" ry="6" fill="#b9b9bf" /><path d="M5 10l5-6 6 2 3-5 7 4 5-4 6 3 6 5-4 4-14 2-13-1z" fill="#f4f4f4" /><path d="M12 7l5 3M33 6l4 5M8 11l4 1M39 10l3-1" stroke="#333" strokeWidth="2.500" /><path d="M22 8l4-1" stroke="#2fb6b0" strokeWidth="3" /><path d="M27 11l4-3" stroke="#c94b2a" strokeWidth="3" /><path d="M1 9c4 6 42 6 46 0l-6 48c-1 6-33 6-34 0z" fill="#dcdcdf" opacity="0.960" /><path d="M27 18c6 2 12 0 16-4" fill="none" stroke="#f3f3f4" strokeWidth="2" /><path d="M14 24l3 26M27 26l-2 24" stroke="#e6e5e8" strokeWidth="4" /></svg>],
];

function Dock() {
  return (
    <div className="relative z-10 mt-[6px] ml-[54px] flex h-[90px] w-[2452px] shrink-0 rounded-[24px] border-2 border-white/20 bg-[linear-gradient(90deg,#5f80a8_0%,#6b7cac_20%,#7480b3_38%,#807bb0_52%,#887bb0_70%,#9676ac_86%,#a8709f_100%)] bg-origin-border pl-1 shadow-[0_0_80px_4px_rgba(0,0,0,0.24)]">
      {dock.map(([name, running, icon]) =>
        name.startsWith("divider") ? (
          <div key={name} className="flex w-8 shrink-0 justify-center pt-[10px]"><div className="mt-px h-[66px] w-[2px] bg-[#4c437c]" /></div>
        ) : (
          <div key={name} className="relative flex w-[72px] shrink-0 flex-col items-center pt-[8px]">
            <div className="flex h-16 items-center justify-center">{icon}</div>
            {running && <div className="mt-1 h-2 w-2 rounded-full bg-[#0b0834]" />}
            {name === "appstore" && (
              <div className="absolute top-[7px] right-[-1px] flex h-[25px] w-[25px] items-center justify-center rounded-full bg-[#f4413f] text-[17px] leading-none text-white">1</div>
            )}
          </div>
        )
      )}
    </div>
  );
}

export default function App() {
  return (
    <div className="flex h-[1600px] w-[2560px] flex-col overflow-hidden bg-[linear-gradient(to_top,#264471_0,#264471_10px,transparent_110px),linear-gradient(90deg,#183f68_0%,#22305c_6%,#2c2748_35%,#3e2749_65%,#54244a_92%,#922a55_100%)] font-['Inter','Open_Sans',sans-serif]">
      <MenuBar />
      <div className="h-[1446px] shrink-0 bg-[linear-gradient(90deg,#d8335f_0,#d8335f_534px,#3a94cc_540px,#1f70aa_1400px,#0d4f86_2560px)] bg-[length:100%_60px] bg-no-repeat pt-[2px]">
        <div className="h-[1444px] overflow-hidden rounded-[22px] bg-white">
          <TabStrip />
          <Toolbar />
          <Bookmarks />
          <div className="h-[2px] bg-[#dadce0]" />
          <Page />
        </div>
      </div>
      <Dock />
    </div>
  );
}
